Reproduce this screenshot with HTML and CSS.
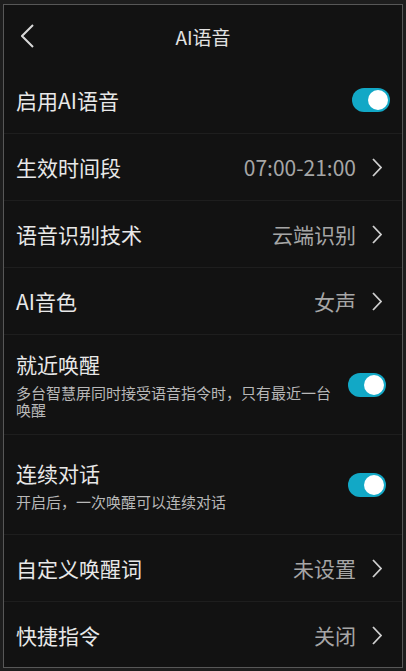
FILE: index.html
```html
<!DOCTYPE html>
<html lang="zh-CN">
<head>
    <meta charset="UTF-8">
    <meta name="viewport" content="width=device-width, initial-scale=1.0">
    <title>AI语音</title>
    <link rel="stylesheet" href="styles.css">
</head>
<body>
    <div class="screen">
        <div class="header">
            <svg class="back" viewBox="0 0 14 24" width="14" height="24">
                <polyline points="12,1 1,12 12,23" fill="none" stroke="#d8d8d8" stroke-width="2" stroke-linejoin="miter"/>
            </svg>
            <div class="title">AI语音</div>
            <div></div>
        </div>

        <div class="row row-switch">
            <div class="label">启用AI语音</div>
            <span class="toggle on"></span>
        </div>

        <div class="row">
            <div class="label">生效时间段</div>
            <div class="value">07:00-21:00</div>
            <svg class="arrow" viewBox="0 0 10 19" width="10" height="19"><polyline points="1,1 9,9.5 1,18" fill="none" stroke="#cfcfcf" stroke-width="1.8"/></svg>
        </div>

        <div class="row">
            <div class="label">语音识别技术</div>
            <div class="value">云端识别</div>
            <svg class="arrow" viewBox="0 0 10 19" width="10" height="19"><polyline points="1,1 9,9.5 1,18" fill="none" stroke="#cfcfcf" stroke-width="1.8"/></svg>
        </div>

        <div class="row">
            <div class="label">AI音色</div>
            <div class="value">女声</div>
            <svg class="arrow" viewBox="0 0 10 19" width="10" height="19"><polyline points="1,1 9,9.5 1,18" fill="none" stroke="#cfcfcf" stroke-width="1.8"/></svg>
        </div>

        <div class="row row-tall">
            <div class="text">
                <div class="label">就近唤醒</div>
                <div class="desc">多台智慧屏同时接受语音指令时，只有最近一台唤醒</div>
            </div>
            <span class="toggle on"></span>
        </div>

        <div class="row row-tall">
            <div class="text">
                <div class="label">连续对话</div>
                <div class="desc">开启后，一次唤醒可以连续对话</div>
            </div>
            <span class="toggle on"></span>
        </div>

        <div class="row">
            <div class="label">自定义唤醒词</div>
            <div class="value">未设置</div>
            <svg class="arrow" viewBox="0 0 10 19" width="10" height="19"><polyline points="1,1 9,9.5 1,18" fill="none" stroke="#cfcfcf" stroke-width="1.8"/></svg>
        </div>

        <div class="row last">
            <div class="label">快捷指令</div>
            <div class="value">关闭</div>
            <svg class="arrow" viewBox="0 0 10 19" width="10" height="19"><polyline points="1,1 9,9.5 1,18" fill="none" stroke="#cfcfcf" stroke-width="1.8"/></svg>
        </div>
    </div>
</body>
</html>
```

FILE: styles.css
```css
html, body {
    margin: 0;
    padding: 0;
    background: #1d1d1d;
}
body {
    font-family: "Noto Sans CJK SC", "Noto Sans", sans-serif;
    color: #e6e6e6;
}
.screen {
    margin: 4px 3px 0 3px;
    width: 398px;
    height: 662px;
    border: 1px solid #575757;
    background: #121212;
    overflow: hidden;
}
.header {
    height: 62px;
    display: grid;
    grid-template-columns: 1fr auto 1fr;
    align-items: center;
    padding: 0 0 0 17px;
    box-sizing: border-box;
}
.back {
    display: block;
}
.title {
    font-size: 19px;
    color: #e2e2e2;
    margin-left: -17px;
}
.row {
    height: 66px;
    border-bottom: 1px solid #1e1e1e;
    display: flex;
    align-items: center;
    padding: 0 20px 0 12px;
}
.row.last {
    border-bottom: none;
}
.row-switch {
    padding-right: 12px;
}
.row-tall {
    height: 99px;
    padding-right: 16px;
    gap: 12px;
}
.label {
    font-size: 21px;
    line-height: 26px;
    color: #e8e8e8;
    flex: 1;
}
.value {
    font-size: 21px;
    color: #a6a6a6;
    margin-right: 16px;
}
.arrow {
    display: block;
}
.text {
    flex: 1;
    display: flex;
    flex-direction: column;
    gap: 7px;
}
.desc {
    font-size: 15px;
    line-height: 17px;
    color: #b8b8b8;
}
.toggle {
    width: 38px;
    height: 24px;
    border-radius: 12px;
    background: #12a8c6;
    position: relative;
    flex-shrink: 0;
}
.toggle.on::after {
    content: "";
    position: absolute;
    right: 2px;
    top: 2px;
    width: 20px;
    height: 20px;
    border-radius: 50%;
    background: #ffffff;
}
```
